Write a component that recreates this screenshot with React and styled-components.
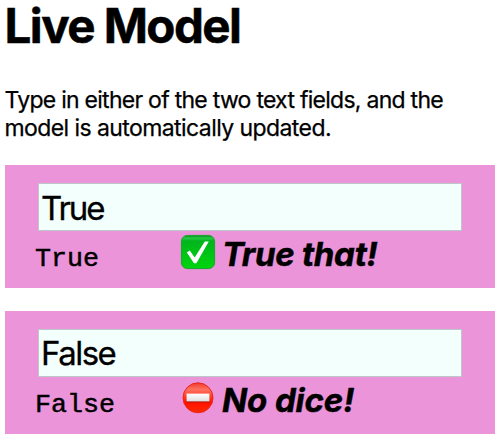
import React, { useState } from "react";
import styled, { createGlobalStyle } from "styled-components";

const GlobalStyle = createGlobalStyle`
  * { box-sizing: border-box; }
  body {
    margin: 0;
    background: #fff;
    color: #000;
    font-family: Inter, "Liberation Sans", sans-serif;
  }
`;

const Page = styled.main`
  display: flow-root;
  width: 501px;
  height: 438px;
  padding: 0 6px 4px 5px;
`;

const Title = styled.h1`
  margin: -3px 0 0 -0.5px;
  height: 89px;
  font-size: 47.5px;
  line-height: 58px;
  font-weight: 700;
  letter-spacing: -1.55px;
  white-space: nowrap;
  -webkit-text-stroke: 0.5px #000;
`;

const Intro = styled.p`
  margin: 0 0 0 -0.5px;
  height: 79px;
  font-size: 23px;
  line-height: 28px;
  -webkit-text-stroke: 0.25px #000;
`;

const IntroLine = styled.span`
  display: block;
  white-space: nowrap;
  letter-spacing: ${(p) => p.$spacing}px;
`;

const Panel = styled.section`
  height: 123px;
  margin-bottom: 23px;
  padding: 18px 33px 0;
  background: #eb94da;

  &:last-child { margin-bottom: 0; }
`;

const Field = styled.input`
  display: block;
  width: 424px;
  height: 48px;
  margin: 0;
  padding: ${(p) => p.$top}px 3px 0 2px;
  border: 1px solid #bcc8c8;
  border-radius: 0;
  outline: none;
  background: #f3fffc;
  color: #000;
  font: 400 33px/43px Inter, "Liberation Sans", sans-serif;
  letter-spacing: ${(p) => p.$spacing}px;
  -webkit-text-stroke: 0.3px #000;
`;

const Result = styled.div`
  display: flex;
  height: 57px;
  margin-left: -3px;
`;

const Value = styled.code`
  width: 145px;
  padding-top: 13px;
  font: 400 26.67px/30px "Liberation Mono", monospace;
  -webkit-text-stroke: 0.5px #000;
`;

const Mark = styled.svg`
  width: 36px;
  height: 36px;
  margin-top: 3px;
  flex: none;
`;

const Message = styled.em`
  margin-left: ${(p) => p.$gap}px;
  padding-top: 3px;
  font-size: 33px;
  line-height: 40px;
  font-weight: 700;
  letter-spacing: ${(p) => p.$spacing}px;
  white-space: nowrap;
  -webkit-text-stroke: 0.5px #000;
`;

function CheckMark() {
  return (
    <Mark viewBox="0 0 36 36" aria-hidden="true">
      <defs>
        <linearGradient id="green" x1="0" y1="0" x2="0" y2="1">
          <stop offset="0" stopColor="#008c1c" />
          <stop offset="0.08" stopColor="#28c944" />
          <stop offset="0.17" stopColor="#00b51c" />
          <stop offset="1" stopColor="#00d50d" />
        </linearGradient>
      </defs>
      <rect x="1.4" y="1.4" width="33.2" height="33.2" rx="6" fill="url(#green)" stroke="#16a52b" strokeWidth="1" />
      <path d="M6.8 18.6 9.8 16.6 14.7 23.4 24.8 7.4H28.8L16.4 29.2H14Z" fill="#fff" />
    </Mark>
  );
}

function NoEntry() {
  return (
    <Mark viewBox="0 0 36 36" aria-hidden="true">
      <defs>
        <linearGradient id="red" x1="0" y1="0" x2="0" y2="1">
          <stop offset="0" stopColor="#ef3a2c" />
          <stop offset="0.22" stopColor="#ff7160" />
          <stop offset="0.48" stopColor="#ff3a20" />
          <stop offset="0.65" stopColor="#ff1200" />
          <stop offset="1" stopColor="#ff2900" />
        </linearGradient>
        <linearGradient id="bar" x1="0" y1="0" x2="0" y2="1">
          <stop offset="0" stopColor="#fff" />
          <stop offset="1" stopColor="#dedede" />
        </linearGradient>
      </defs>
      <circle cx="18" cy="17.8" r="15" fill="url(#red)" stroke="#e9281d" strokeWidth="1" />
      <rect x="6.6" y="21" width="22.8" height="1.4" fill="#a81408" />
      <rect x="6.6" y="13.6" width="22.8" height="7.8" fill="url(#bar)" />
    </Mark>
  );
}

function ModelPanel({ initial, inputSpacing, inputTop, icon, gap, spacing, children }) {
  const [value, setValue] = useState(initial);
  return (
    <Panel>
      <Field
        value={value}
        onChange={(e) => setValue(e.target.value)}
        $spacing={inputSpacing}
        $top={inputTop}
        spellCheck={false}
        aria-label={initial}
      />
      <Result>
        <Value>{value}</Value>
        {icon}
        <Message $gap={gap} $spacing={spacing}>{children}</Message>
      </Result>
    </Panel>
  );
}

export default function App() {
  return (
    <Page>
      <GlobalStyle />
      <Title>Live Model</Title>
      <Intro>
        <IntroLine $spacing={-0.73}>Type in either of the two text fields, and the</IntroLine>
        <IntroLine $spacing={-0.58}>model is automatically updated.</IntroLine>
      </Intro>
      <ModelPanel initial="True" inputSpacing={-2} inputTop={2} icon={<CheckMark />} gap={6} spacing={-0.3}>
        True that!
      </ModelPanel>
      <ModelPanel initial="False" inputSpacing={-1.5} inputTop={0} icon={<NoEntry />} gap={6} spacing={-0.1}>
        No dice!
      </ModelPanel>
    </Page>
  );
}
